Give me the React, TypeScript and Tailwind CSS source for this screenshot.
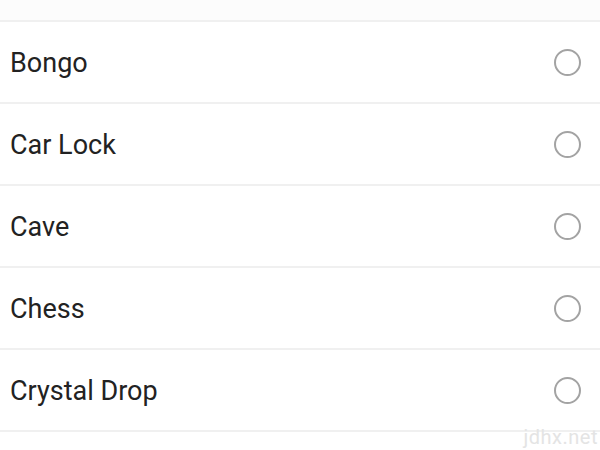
import React from "react";

const sounds = ["Bongo", "Car Lock", "Cave", "Chess", "Crystal Drop"];

export default function App() {
  return (
    <div className="relative w-[600px] h-[450px] overflow-hidden bg-white font-['Roboto',sans-serif]">
      <div className="h-[20px] bg-[#fcfcfc]" />
      {sounds.map((name) => (
        <div
          key={name}
          className="flex h-[82px] items-center justify-between border-t-2 border-[#f0f0f0] pl-[10px] pr-[19px]"
        >
          <span className="pt-[3px] text-[27px] text-[#222222]">{name}</span>
          <span className="box-border size-[27px] rounded-full border-2 border-[#a3a3a3]" />
        </div>
      ))}
      <div className="border-t-2 border-[#f0f0f0]" />
      <span className="absolute right-[2px] bottom-[3px] text-[20px] leading-none tracking-wide text-[#e4e4e4]">
        jdhx.net
      </span>
    </div>
  );
}
